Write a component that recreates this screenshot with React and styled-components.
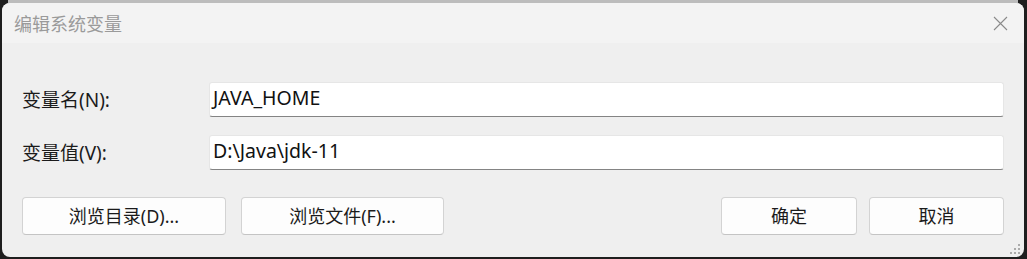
import React from 'react';
import styled, { createGlobalStyle } from 'styled-components';

const GlobalStyle = createGlobalStyle`
  html, body {
    margin: 0;
    padding: 0;
    background: #1e1e1e;
  }
  body {
    font-family: "Noto Sans", "Noto Sans CJK SC", sans-serif;
  }
`;

const Screen = styled.div`
  width: 1027px;
  height: 259px;
  overflow: hidden;
  background: #1e1e1e;
`;

// the window behind the dialog peeks out along the top edge
const BehindStrip = styled.div`
  height: 3px;
  margin-left: 8px;
  width: 1010px;
  background: #bcbcbc;
`;

const Dialog = styled.div`
  position: relative;
  margin-left: 2px;
  width: 1022px;
  height: 254px;
  background: #efefef;
  border-radius: 8px;
  display: flex;
  flex-direction: column;
  overflow: hidden;
  font-size: 18px;
  color: #1b1b1b;
`;

const TitleBar = styled.div`
  height: 40px;
  flex: none;
  display: flex;
  align-items: center;
  justify-content: space-between;
  padding-left: 12px;
  background: #f3f3f3;
`;

const Title = styled.span`
  color: #9a9a9a;
  font-size: 18px;
`;

const CloseButton = styled.div`
  width: 48px;
  height: 40px;
  display: flex;
  align-items: center;
  justify-content: center;
  color: #8a8a8a;
`;

const Fields = styled.div`
  display: grid;
  grid-template-columns: 187px 1fr;
  row-gap: 18px;
  align-items: center;
  padding: 39px 20px 0;
`;

const Label = styled.label`
  font-size: 19px;
  padding-bottom: 1px;
`;

const TextBox = styled.div`
  height: 35px;
  box-sizing: border-box;
  display: flex;
  align-items: center;
  padding: 0 4px 4px 3px;
  background: #ffffff;
  border: 1px solid #e6e6e6;
  border-bottom-color: #848484;
  border-radius: 3px;
  font-size: 19.5px;
  color: #111;
  white-space: pre;
`;

const ButtonRow = styled.div`
  display: flex;
  justify-content: space-between;
  padding: 0 20px;
  margin-top: 27px;
`;

const ButtonGroup = styled.div`
  display: flex;
  gap: ${(p) => p.$gap}px;
`;

const Button = styled.button`
  width: ${(p) => p.$w}px;
  height: 38px;
  box-sizing: border-box;
  background: #fdfdfd;
  border: 1px solid #d3d3d3;
  border-bottom-color: #c4c4c4;
  border-radius: 4px;
  font-family: inherit;
  font-size: 18px;
  color: #1b1b1b;
  padding: 0 0 2px;
`;

const Grip = styled.svg`
  position: absolute;
  right: 3px;
  bottom: 2px;
`;

const App = () => (
  <>
    <GlobalStyle />
    <Screen>
      <BehindStrip />
      <Dialog>
        <TitleBar>
          <Title>编辑系统变量</Title>
          <CloseButton>
            <svg width="15" height="15" viewBox="0 0 15 15">
              <path d="M1 1 L14 14 M14 1 L1 14" stroke="currentColor" strokeWidth="1.1" fill="none" />
            </svg>
          </CloseButton>
        </TitleBar>

        <Fields>
          <Label>变量名(N):</Label>
          <TextBox>JAVA_HOME</TextBox>
          <Label>变量值(V):</Label>
          <TextBox>D:\Java\jdk-11</TextBox>
        </Fields>

        <ButtonRow>
          <ButtonGroup $gap={15}>
            <Button $w={204}>浏览目录(D)...</Button>
            <Button $w={203}>浏览文件(F)...</Button>
          </ButtonGroup>
          <ButtonGroup $gap={12}>
            <Button $w={136}>确定</Button>
            <Button $w={135}>取消</Button>
          </ButtonGroup>
        </ButtonRow>

        <Grip width="11" height="11" viewBox="0 0 11 11">
          <g fill="#ababab">
            <rect x="8" y="0" width="2" height="2" />
            <rect x="4" y="4" width="2" height="2" />
            <rect x="8" y="4" width="2" height="2" />
            <rect x="0" y="8" width="2" height="2" />
            <rect x="4" y="8" width="2" height="2" />
            <rect x="8" y="8" width="2" height="2" />
          </g>
        </Grip>
      </Dialog>
    </Screen>
  </>
);

export default App;
